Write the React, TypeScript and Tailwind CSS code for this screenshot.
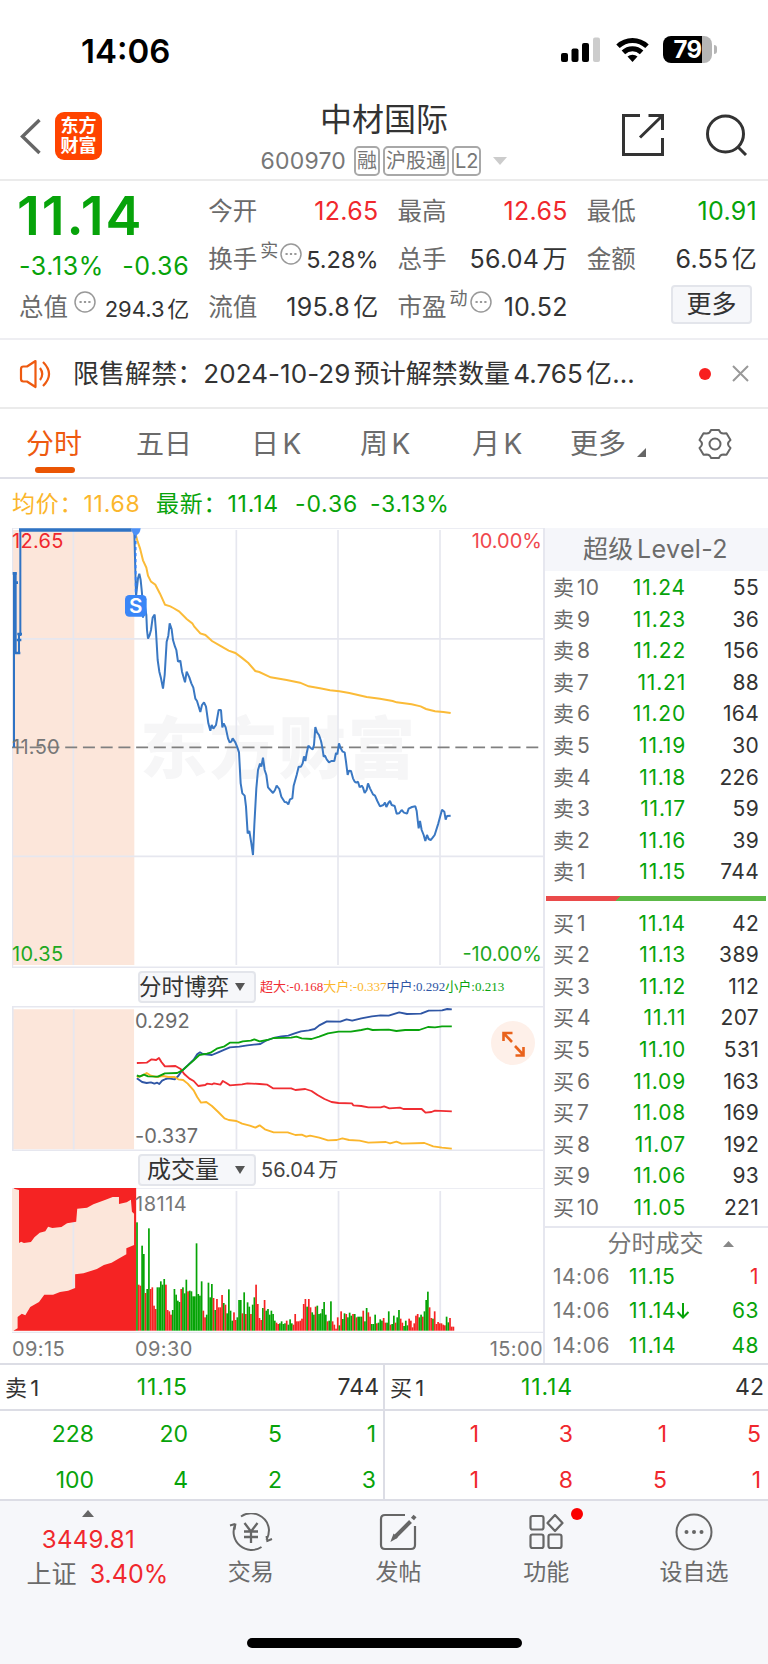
import type { ReactNode } from 'react';
import clsx from 'clsx';

type Level = { label: string; price: string; volume: number };

const asks: Level[] = [
  { label: '卖10', price: '11.24', volume: 55 },
  { label: '卖9', price: '11.23', volume: 36 },
  { label: '卖8', price: '11.22', volume: 156 },
  { label: '卖7', price: '11.21', volume: 88 },
  { label: '卖6', price: '11.20', volume: 164 },
  { label: '卖5', price: '11.19', volume: 30 },
  { label: '卖4', price: '11.18', volume: 226 },
  { label: '卖3', price: '11.17', volume: 59 },
  { label: '卖2', price: '11.16', volume: 39 },
  { label: '卖1', price: '11.15', volume: 744 }
];

const bids: Level[] = [
  { label: '买1', price: '11.14', volume: 42 },
  { label: '买2', price: '11.13', volume: 389 },
  { label: '买3', price: '11.12', volume: 112 },
  { label: '买4', price: '11.11', volume: 207 },
  { label: '买5', price: '11.10', volume: 531 },
  { label: '买6', price: '11.09', volume: 163 },
  { label: '买7', price: '11.08', volume: 169 },
  { label: '买8', price: '11.07', volume: 192 },
  { label: '买9', price: '11.06', volume: 93 },
  { label: '买10', price: '11.05', volume: 221 }
];

const trades = [
  { time: '14:06', price: '11.15', down: false, volume: 1, up: true },
  { time: '14:06', price: '11.14', down: true, volume: 63, up: false },
  { time: '14:06', price: '11.14', down: false, volume: 48, up: false }
];

// one entry per minute: r = up, g = down
const volumeBars =
  'g325 r138 r135 g255 g230 r113 g125 g307 r125 r130 r75 r65 g130 g130 g148 g138 g155 r138 r62 r58 r48 g62 g125 g108 g90 g86 r125 g130 g112 g153 r118 g120 g118 g103 g103 g262 g110 g105 g148 r60 r40 g48 g144 g100 g140 r98 g62 r95 r70 r70 r107 g83 r78 g52 g124 g60 g30 r55 r32 g40 g92 g92 r52 g115 r50 g85 g72 r50 g78 g100 r138 r80 r38 r32 g68 r92 g60 g65 g48 g60 g50 g30 r24 r20 g22 g28 g20 g22 r30 g18 g34 g22 r18 r50 r28 r28 r30 r36 r80 r95 g72 r95 r70 g55 g48 r72 g75 g50 g52 g65 g86 g48 r28 g30 g88 r28 r18 r6 r40 g16 r58 g35 g52 r50 g40 g54 g45 r50 g50 r40 g42 g42 g42 r60 g28 g68 r55 r42 g20 g20 g48 r22 g24 g34 g30 r38 r24 g24 g58 r18 g20 g45 r24 g40 g62 r36 r24 g14 g30 g16 r36 r30 r10 r22 r45 r50 g40 g48 r42 g58 g92 g117 r70 r38 g36 r58 r20 r26 r22 r22 r18 r16 g42 g25 r38 r12 r12'.split(
    ' '
  );

const priceLine =
  '403,50 408,245 414,190 418,176 422,195 426,235 429,308 434,270 439,300 441,345 444,371 449,360 453,345 458,308 464,299 468,350 473,435 478,470 483,490 489,521 494,480 500,380 505,362 509,325 515,343 519,375 525,395 529,405 534,440 541,437 546,470 555,502 560,470 568,487 574,505 580,518 586,551 591,558 601,591 606,570 612,562 618,575 625,625 631,647 635,630 640,641 648,630 656,585 663,585 667,637 671,625 677,637 684,670 689,682 694,680 698,670 706,682 712,697 717,712 722,805 727,835 734,842 738,875 743,955 748,948 754,985 759,1020 763,930 769,820 774,765 780,746 784,755 789,728 794,765 799,780 804,817 811,825 819,834 825,825 830,812 838,822 844,845 854,861 860,862 865,868 870,853 877,850 881,812 890,780 896,755 903,755 908,745 912,724 916,738 920,715 925,692 932,699 938,703 942,690 946,636 951,652 957,660 963,678 967,697 971,725 975,722 980,733 987,742 994,738 1003,738 1008,714 1012,718 1017,685 1022,700 1028,710 1034,712 1038,740 1043,780 1047,767 1053,768 1059,790 1064,800 1069,803 1074,800 1079,817 1085,812 1089,818 1094,834 1100,825 1104,805 1110,820 1119,838 1125,842 1132,858 1140,874 1150,870 1155,863 1159,876 1165,864 1170,858 1175,870 1184,873 1190,896 1197,895 1205,885 1212,893 1221,896 1226,881 1236,876 1246,874 1250,888 1253,915 1256,940 1260,918 1265,945 1271,960 1276,978 1281,960 1286,972 1292,975 1298,968 1304,960 1315,925 1326,884 1333,890 1337,914 1341,903 1352,902';

const averageLine =
  '405,50 413,80 420,100 429,136 439,158 444,182 453,200 466,209 480,236 495,269 511,274 520,279 537,289 560,312 577,325 583,335 601,355 616,360 636,378 660,392 686,407 706,414 725,428 745,444 766,468 778,471 812,487 860,495 900,503 926,514 960,520 990,526 1018,529 1048,534 1100,546 1140,551 1178,558 1190,562 1235,568 1262,574 1278,582 1305,589 1330,591 1352,594';

const Circled = ({ className }: { className?: string }) => (
  <svg className={clsx('size-[22px] shrink-0', className)} viewBox="0 0 22 22" fill="none" stroke="#999">
    <circle cx="11" cy="11" r="10" strokeWidth="1.5" />
    <path d="M5.5 11h2.2M9.9 11h2.2M14.3 11h2.2" strokeWidth="2.2" />
  </svg>
);

const StatusBar = () => (
  <div className="flex h-[96px] items-start justify-between pl-[81px] pr-[51px] pt-[35px]">
    <span className="text-[33px] font-semibold leading-8 text-black">14:06</span>
    <div className="flex items-center gap-4 pt-px">
      <svg width="39" height="26" viewBox="0 0 39 26">
        <rect x="0" y="16" width="7" height="9" rx="2" />
        <rect x="10.5" y="11.5" width="7" height="13.5" rx="2" />
        <rect x="21" y="6" width="7" height="19" rx="2" />
        <rect x="32" y="0.5" width="7" height="24.5" rx="2" fill="#ccc" />
      </svg>
      <svg width="33" height="25" viewBox="0 0 33 25" fill="none" stroke="#000" strokeWidth="5">
        <path d="M2 9.3a21 21 0 0 1 29 0" />
        <path d="M7.4 15.4a13 13 0 0 1 18.2 0" />
        <path d="M16.5 25l-5-5.4a7.5 7.5 0 0 1 10 0z" fill="#000" stroke="none" />
      </svg>
      <div className="-ml-0.5 flex items-center">
        <div className="flex h-[27px] w-[49px] items-center justify-center rounded-[8px] bg-[linear-gradient(90deg,#000_79%,#b5b5b5_79%)] text-[24px] font-bold leading-none tracking-tight text-white">
          79
        </div>
        <div className="ml-[2px] h-[9px] w-[3px] rounded-r-full bg-[#b5b5b5]" />
      </div>
    </div>
  </div>
);

const Tag = ({ children }: { children: ReactNode }) => (
  <span className="flex h-[30px] items-center rounded-[5px] border-2 border-[#a8a8a8] px-px text-[20px] leading-none text-[#777]">
    {children}
  </span>
);

const Header = () => (
  <div className="flex h-[85px] items-center justify-between border-b-2 border-[#ebebeb] pl-5 pr-5">
    <div className="flex w-[200px] items-center gap-[14px] pb-[3px]">
      <svg width="21" height="37" viewBox="0 0 21 37" fill="none" stroke="#666" strokeWidth="3.4">
        <path d="M19.5 2L2.5 18.5l17 16.5" />
      </svg>
      <div className="flex h-[48px] w-[47px] flex-col items-center justify-center rounded-[9px] bg-[#ff4400] text-[18px] font-bold leading-[20px] text-white">
        <span>东方</span>
        <span>财富</span>
      </div>
    </div>
    <div className="flex flex-col items-center">
      <div className="text-[32px] leading-[42px] text-[#333]">中材国际</div>
      <div className="flex h-[36px] items-center gap-[3px] pt-[5px]">
        <span className="mr-[5px] text-[23px] tracking-[0.2px] text-[#777]">600970</span>
        <Tag>融</Tag>
        <Tag>沪股通</Tag>
        <Tag>L2</Tag>
        <svg className="ml-[9px]" width="14" height="8" viewBox="0 0 14 8" fill="#ccc">
          <path d="M0 0h14L7 8z" />
        </svg>
      </div>
    </div>
    <div className="flex w-[200px] items-center justify-end gap-[41px] pb-[6px]">
      <svg width="44" height="44" viewBox="0 0 44 44" fill="none" stroke="#333" strokeWidth="3">
        <path d="M19 2.5H2.5v39h39V25" />
        <path d="M27.5 2.5h14V17M41 3L19 24.5" />
      </svg>
      <svg width="42" height="42" viewBox="0 0 42 42" fill="none" stroke="#333" strokeWidth="3">
        <circle cx="19.5" cy="20" r="18" />
        <path d="M32 33l8 8" />
      </svg>
    </div>
  </div>
);

const Stat = ({ label, value, sup, color = 'text-[#333]', size = 'text-[25px] tracking-[0.3px]' }: {
  label: string;
  value: string;
  sup?: string;
  color?: string;
  size?: string;
}) => (
  <div className="flex h-[48px] items-center justify-between whitespace-nowrap leading-none">
    <span className="flex items-center text-[24.5px] text-[#6b6b6b]">
      {label}
      {sup && <span className="mb-4 ml-[3px] mr-[2px] text-[18px]">{sup}</span>}
      {sup !== undefined && <Circled className={sup ? 'mb-2.5' : 'mb-2.5 ml-[6px]'} />}
    </span>
    <span className={clsx('-mr-px', color, size)}>{value}</span>
  </div>
);

const Stats = () => (
  <div className="grid h-[159px] grid-cols-4 gap-x-5 border-b-2 border-[#eeeef2] pl-[19px] pr-3 pt-[6px]">
    <div>
      <div className="-ml-[2px] h-[56px] pt-[2px] text-[54px] font-semibold leading-none tracking-[1.9px] text-[#07a30a]">11.14</div>
      <div className="-mr-px flex h-[46px] items-center justify-between text-[25px] leading-none tracking-[0.6px] text-[#07a30a]">
        <span>-3.13%</span>
        <span>-0.36</span>
      </div>
      <div className="-mt-1.5">
        <Stat label="总值" sup="" value="294.3亿" size="pt-[3px] text-[22px]" />
      </div>
    </div>
    <div>
      <Stat label="今开" value="12.65" color="text-[#f0282d]" />
      <Stat label="换手" sup="实" value="5.28%" size="pt-[2px] text-[23.5px]" />
      <Stat label="流值" value="195.8亿" />
    </div>
    <div>
      <Stat label="最高" value="12.65" color="text-[#f0282d]" />
      <Stat label="总手" value="56.04万" />
      <Stat label="市盈" sup="动" value="10.52" />
    </div>
    <div>
      <Stat label="最低" value="10.91" color="text-[#07a30a]" />
      <Stat label="金额" value="6.55亿" />
      <div className="ml-auto mr-[4px] mt-[2px] flex h-[39px] w-[81px] items-center justify-center rounded-[4px] border-2 border-[#e3e5eb] bg-[#f6f7fa] text-[25px] text-[#333]">
        更多
      </div>
    </div>
  </div>
);

const Notice = () => (
  <div className="flex h-[69px] items-center border-b-2 border-[#ebebeb] pl-[19px] pr-[19px]">
    <svg width="34" height="30" viewBox="0 0 34 30" fill="none" stroke="#ee5a10" strokeWidth="2.2" strokeLinejoin="round">
      <path d="M16.5 2L8 7.5H4.5Q2 7.5 2 10v10q0 2.500 2.500 2.500H8l8.500 5.500z" />
      <path d="M21 9q4.500 6 0 12M24 3q12 12 0 24" />
    </svg>
    <span className="ml-5 whitespace-nowrap text-[26px] tracking-[0.06px] text-[#333]">限售解禁：2024-10-29预计解禁数量4.765亿...</span>
    <span className="ml-auto size-3 rounded-full bg-[#f81f1f]" />
    <svg className="ml-[21px]" width="17" height="17" viewBox="0 0 17 17" stroke="#999" strokeWidth="2">
      <path d="M1 1l15 15M16 1L1 16" />
    </svg>
  </div>
);

const Tabs = () => (
  <div className="flex h-[70px] items-start border-b-2 border-[#dfe0e8] pt-[15px] text-[28px] leading-[40px] text-[#6b6b6b]">
    <div className="ml-[26px] w-[110px] text-[#ee5a10]">
      分时
      <div className="ml-[9px] mt-[3px] h-[6px] w-10 rounded-full bg-[#ea5504]" />
    </div>
    <div className="w-[115px]">五日</div>
    <div className="w-[109px]">日K</div>
    <div className="w-[112px]">周K</div>
    <div className="w-[98px]">月K</div>
    <div className="flex w-[128px] items-end">
      更多
      <svg className="mb-[7px] ml-[11px]" width="9" height="9" viewBox="0 0 9 9" fill="#666">
        <path d="M9 0v9H0z" />
      </svg>
    </div>
    <svg className="mt-[4px]" width="34" height="32" viewBox="0 0 34 32" fill="none" stroke="#666" strokeWidth="2">
      <path
        d="M13 2h8q1 3.500 4.500 3.500l3-.2 4 6.700q-2.500 2-2.500 4t2.500 4l-4 6.700-3-.2Q22 26.500 21 30h-8q-1-3.500-4.500-3.500l-3 .2-4-6.700Q4 18 4 16t-2.500-4l4-6.700 3 .2Q12 5.500 13 2z"
        strokeLinejoin="round"
      />
      <circle cx="17" cy="16" r="5.500" />
    </svg>
  </div>
);

const Summary = () => (
  <div className="flex h-[49px] items-center whitespace-pre pl-3 pt-px text-[23px] tracking-[0.8px] text-[#07a30a]">
    <span className="w-[144px] text-[#fbb62c]">均价：11.68</span>
    <span className="w-[139px]">最新：11.14</span>
    <span className="w-[75px]">-0.36</span>
    <span>-3.13%</span>
  </div>
);

const PriceChart = () => (
  <div className="relative h-[440px] text-[20px] leading-none">
    <svg className="block h-[440px] w-[531px]" viewBox="36 39 1593 1320" fill="none">
      <path d="M36 45h367v1305H36z" fill="#fce6da" />
      <text x="420" y="774" fontSize="202" fontWeight="900" fill="#f6f6f7" textLength="825">东方财富</text>
      <path d="M36 39H1629M36 371.500H1629M36 1024H1629M36 1357H1629M37 39V1357" stroke="#e6e7ef" strokeWidth="5" />
      <path d="M220 45V1350M709 45V1350M1014 45V1350M1320 45V1350" stroke="#e6e7ef" strokeWidth="5" />
      <path d="M36 697H1620" stroke="#808080" strokeWidth="5" strokeDasharray="36 17.200" />
      <path d="M42 697V175h5v30V414h10V360h4V45" stroke="#2f73c4" strokeWidth="6" />
      <path d="M38 175h12M46 203h8M45 414h16M50 375h14M52 357h14" stroke="#2f73c4" strokeWidth="8" />
      <path d="M57 45H395" stroke="#2f73c4" strokeWidth="11" />
      <polyline points={averageLine} stroke="#fbbb38" strokeWidth="6" />
      <polyline points={priceLine} stroke="#3a78c3" strokeWidth="6" strokeLinejoin="bevel" />
      <path d="M407 60V240" stroke="#2f7df6" strokeWidth="5" strokeDasharray="10 8" />
      <path d="M394 40h28q-2 18-15 22-11-4-13-22z" fill="#4c90f7" />
      <rect x="375" y="240" width="65" height="65" rx="13" fill="#3a86f7" />
      <text x="407.500" y="295" fontSize="62" fontWeight="600" fill="#fff" textAnchor="middle">S</text>
    </svg>
    <span className="absolute left-0 top-[3px] tracking-[0.3px] text-[#f0282d]">12.65</span>
    <span className="absolute right-px top-[3px] text-[#f0484d]">10.00%</span>
    <span className="absolute left-0 top-[209px] tracking-[0.3px] text-[#777]">11.50</span>
    <span className="absolute bottom-[4px] left-0 tracking-[0.3px] text-[#1fa822]">10.35</span>
    <span className="absolute bottom-[4px] right-px text-[#1fa822]">-10.00%</span>
  </div>
);

const Picker = ({ children }: { children: ReactNode }) => (
  <div className="flex h-[32px] w-[118px] items-center justify-between whitespace-nowrap rounded-[4px] border-2 border-[#e3e5eb] bg-[#f6f7fa] pr-[9px] text-[#333]">
    {children}
    <svg width="10" height="8" viewBox="0 0 10 8" fill="#555">
      <path d="M0 0h10L5 8z" />
    </svg>
  </div>
);

const FlowChart = () => (
  <div className="relative h-[145px] text-[20px] leading-none text-[#6b6b6b]">
    <svg className="block h-[145px] w-[531px]" viewBox="34 137 1514 435" preserveAspectRatio="none" fill="none">
      <path d="M34 147h348v420H34z" fill="#fce6da" />
      <g stroke="#e6e7ef" strokeWidth="5">
        <path d="M34 139H1548M34 570H1548M36 137V570M210 147V567M674 147V567M965 147V567M1255 147V567" />
      </g>
      <g strokeWidth="5.500" strokeLinejoin="round">
        <polyline
          stroke="#2f56a5"
          points="390,354 405,365 418,368 430,366 440,370 448,367 454,371 462,361 472,356 480,354 498,357 508,347 518,332 535,315 552,298 562,282 570,276 578,281 604,284 622,276 640,268 655,261 682,259 705,255 742,251 760,240 780,233 802,228 822,226 840,219 858,213 880,210 897,206 910,195 932,183 970,184 988,177 1004,181 1030,174 1060,168 1085,165 1108,166 1138,156 1160,161 1200,160 1222,151 1260,150 1275,146 1288,147"
        />
        <polyline
          stroke="#fbb62c"
          points="390,350 405,346 418,338 428,345 445,350 465,347 480,350 498,350 508,357 522,359 535,370 552,390 562,410 573,427 588,425 604,437 622,455 640,474 652,479 674,482 690,490 712,496 728,502 740,495 755,507 780,516 820,516 842,524 860,523 873,529 884,526 910,532 935,540 960,539 976,534 995,539 1025,541 1050,547 1100,545 1112,549 1130,544 1145,550 1210,548 1235,558 1260,562 1288,565"
        />
        <polyline
          stroke="#f02d32"
          points="390,308 418,307 432,297 445,299 453,293 460,305 470,318 500,317 515,326 525,341 540,355 552,362 565,377 585,374 590,370 605,372 610,369 628,373 635,362 645,368 655,375 690,372 705,369 740,371 762,373 778,384 830,384 842,389 870,386 888,392 905,404 925,416 945,425 965,428 1003,429 1007,435 1030,437 1050,441 1085,441 1095,438 1110,444 1140,442 1150,446 1202,446 1213,457 1230,455 1240,451 1288,453"
        />
        <polyline
          stroke="#0aa30d"
          points="390,345 398,349 410,343 422,348 450,349 470,339 505,338 520,330 538,313 552,300 568,284 590,280 600,277 620,264 640,258 655,247 680,247 692,243 715,241 725,237 740,243 762,239 780,233 830,232 845,229 860,234 888,236 910,229 935,219 965,214 1000,214 1030,209 1048,205 1062,209 1108,208 1130,212 1155,209 1195,209 1220,200 1240,201 1260,198 1288,198"
        />
      </g>
    </svg>
    <span className="absolute left-[123px] top-[5px]">0.292</span>
    <span className="absolute bottom-[5px] left-[123px] tracking-[0.1px]">-0.337</span>
    <svg className="absolute left-[479px] top-[15px]" width="44" height="44" viewBox="0 0 44 44" fill="none">
      <circle cx="22" cy="22" r="22" fill="#fef0e9" />
      <path d="M12.500 20V12h9M12.500 12l8.500 9M24.500 34.500h8V26M32.500 34l-8.500-9" stroke="#e9621b" strokeWidth="2.600" />
    </svg>
  </div>
);

const VolumeChart = () => (
  <div className="relative h-[145px] text-[20px] leading-none tracking-[0.5px] text-[#777]">
    <svg className="block h-[145px] w-[531px]" viewBox="34 131 1514 435" preserveAspectRatio="none" fill="none">
      <path d="M34 133h350v426H34z" fill="#fce6da" />
      <path
        d="M34 131H1548M34 565H1548M209 220V440M674 140V559M965 140V559M1255 140V559"
        stroke="#e6e7ef"
        strokeWidth="5"
      />
      <path
        d="M38 131h350v428H38l12-7V518l12-10 10 5 14-25 25-15 15-22 25 0 20-8 23-4 20-8V390l24-3 38-13 20-12 22-7 17-10 25-15V312l22-10V208l-6-6-3-36-12 8-22 5V158h-18l-20 8-35 14-18 10-28 3-3 39-26 5-16 11-26 3-12-4-8 14-16 4-15 14-10 14-20 3-8-4-6 4V137l-12-3z"
        fill="#f52323"
      />
      {volumeBars.map((bar, i) => (
        <rect
          key={i}
          x={388 + i * 4.85}
          y={559 - parseInt(bar.slice(1))}
          width="4.850"
          height={parseInt(bar.slice(1))}
          fill={bar[0] === 'r' ? '#f52323' : '#06a406'}
        />
      ))}
    </svg>
    <span className="absolute left-[123px] top-[6px]">18114</span>
  </div>
);

const BookRow = ({ label, price, volume }: Level) => (
  <div className="flex h-[31.55px] items-center whitespace-nowrap pl-[8px] pr-[9px] text-[21px] leading-none tracking-[0.3px]">
    <span className="w-[50px]">{label}</span>
    <span className="w-[83px] text-right tracking-[0.8px] text-[#07a30a]">{price}</span>
    <span className="ml-auto text-[#333]">{volume}</span>
  </div>
);

const OrderBook = () => (
  <div className="w-[225px] border-l-2 border-[#e6e7ef] text-[#6b6b6b]">
    <div className="flex h-[43px] items-center justify-center bg-[#f5f6fa] pr-[2px] pt-px text-[25px] tracking-[0.4px]">超级Level-2</div>
    <div className="h-[316.5px] pt-[1px]">
      {asks.map((level) => (
        <BookRow key={level.label} {...level} />
      ))}
    </div>
    <div className="ml-[1px] mt-[8px] h-[5px] w-[220px] bg-[linear-gradient(135deg,#ea4a4a_33%,#5cb947_33%)]" />
    <div className="mt-[7px] h-[318.5px]">
      {bids.map((level) => (
        <BookRow key={level.label} {...level} />
      ))}
    </div>
    <div className="flex h-[33px] items-center justify-center gap-[19px] border-t-2 border-[#e6e7ef] pl-[40px] pr-3 text-[24px] text-[#777]">
      分时成交
      <svg width="11" height="6" viewBox="0 0 11 6" fill="#888">
        <path d="M0 6L5.500 0 11 6z" />
      </svg>
    </div>
    {trades.map((trade, i) => (
      <div key={i} className="flex h-[34.5px] items-center pl-[8px] pr-[9px] text-[21px] leading-none tracking-[0.5px]">
        <span className="w-[76px] text-[#777]">{trade.time}</span>
        <span className="flex items-center tracking-[0.8px] text-[#07a30a]">
          {trade.price}
          {trade.down && (
            <svg width="14" height="16" viewBox="0 0 14 16" fill="none" stroke="#07a30a" strokeWidth="2">
              <path d="M7 0v14.500M1.500 9L7 14.500 12.500 9" />
            </svg>
          )}
        </span>
        <span className={clsx('ml-auto', trade.up ? 'text-[#f0282d]' : 'text-[#07a30a]')}>{trade.volume}</span>
      </div>
    ))}
  </div>
);

const Queue = ({ label, price, volume, rows, color }: {
  label: string;
  price: string;
  volume: string;
  rows: string[][];
  color: string;
}) => (
  <div className="w-[385px] border-r-2 border-[#dcdde5] text-[23px] leading-none last:w-[383px] last:border-r-0">
    <div className="flex h-[46px] items-center border-b-2 border-[#dcdde5] pl-[5px] pr-[4px] pt-px text-[#333]">
      <span className="w-[70px] text-[22px] tracking-[0.5px]">{label}</span>
      <span className="w-[113px] text-right tracking-[0.9px] text-[#07a30a]">{price}</span>
      <span className="ml-auto">{volume}</span>
    </div>
    {rows.map((row, i) => (
      <div key={i} className={clsx('grid h-[46px] grid-cols-4 items-center pr-[7px] text-right', color)}>
        {row.map((cell, j) => (
          <span key={j}>{cell}</span>
        ))}
      </div>
    ))}
  </div>
);

const NavItem = ({ label, children }: { label: string; children: ReactNode }) => (
  <div className="flex w-[148px] flex-col items-center">
    <div className="relative mt-[3px] flex h-[38px] items-center">{children}</div>
    <span className="mt-[4px] text-[23px] leading-[34px]">{label}</span>
  </div>
);

const BottomNav = () => (
  <div className="flex h-[124px] pt-[9px] text-[#6b6b6b]">
    <div className="flex w-[177px] flex-col items-center text-[25px] leading-[35px]">
      <svg width="12" height="7" viewBox="0 0 12 7" fill="#666">
        <path d="M0 7l6-7 6 7z" />
      </svg>
      <span className="mt-[5px] text-[24px] tracking-[0.3px] text-[#f0282d]">3449.81</span>
      <span className="ml-[18px] whitespace-nowrap">
        上证<span className="ml-[10px] text-[#f0282d]">3.40%</span>
      </span>
    </div>
    <NavItem label="交易">
      <svg width="44" height="38" viewBox="0 0 44 38" fill="none" stroke="#666" strokeWidth="2">
        <path d="M12 3.500A18 18 0 0 1 40 17q0 5-2.500 10M32.500 34A18 18 0 0 1 6 12M38.500 29l-1-6M38 28l5-2M6 11l-5 1.500M6.500 10.500l-1 6" />
        <path d="M15.500 10l6.500 8.500L28.500 10M22 18v12M15 18.500h14M15 24h14" strokeWidth="2.300" />
      </svg>
    </NavItem>
    <NavItem label="发帖">
      <svg width="38" height="38" viewBox="0 0 38 38" fill="none" stroke="#666" strokeWidth="2.200">
        <path d="M26 2H6Q2 2 2 6v26q0 4 4 4h26q4 0 4-4V13" />
        <path d="M31.500 8.500L16 24" strokeWidth="4" />
        <path d="M13.500 26.500l1.500-4 2 2z" fill="#666" />
        <path d="M33.500 6l2.500-3" strokeWidth="4" />
      </svg>
    </NavItem>
    <NavItem label="功能">
      <svg width="35" height="36" viewBox="0 0 35 36" fill="none" stroke="#666" strokeWidth="2.200">
        <rect x="1.500" y="2" width="13" height="13.500" rx="2" />
        <rect x="1.500" y="20.500" width="13" height="13.500" rx="2" />
        <rect x="19.500" y="20.500" width="13" height="13.500" rx="2" />
        <path d="M26 1l7.500 8L26 17l-7.500-8z" strokeLinejoin="round" />
      </svg>
      <span className="absolute -right-[19px] -top-[5px] size-3 rounded-full bg-[#fa0000]" />
    </NavItem>
    <NavItem label="设自选">
      <svg width="38" height="38" viewBox="0 0 38 38" fill="none" stroke="#666" strokeWidth="2">
        <circle cx="19" cy="19" r="17.500" />
        <g fill="#666" stroke="none">
          <circle cx="11.500" cy="19" r="2" />
          <circle cx="19" cy="19" r="2" />
          <circle cx="26.500" cy="19" r="2" />
        </g>
      </svg>
    </NavItem>
  </div>
);

export default function App() {
  return (
    <div className="h-[1664px] w-[768px] overflow-hidden bg-white font-['Inter','Noto_Sans_CJK_SC',sans-serif] [text-autospace:normal]">
      <StatusBar />
      <Header />
      <Stats />
      <Notice />
      <Tabs />
      <Summary />
      <div className="flex h-[835px]">
        <div className="w-[543px] pl-3">
          <PriceChart />
          <div className="flex h-[38px] items-center pl-[126px]">
            <div className="text-[22.5px]">
              <Picker>
                <span className="-ml-px">分时博弈</span>
              </Picker>
            </div>
            <div className="ml-1 whitespace-nowrap font-['Liberation_Serif','Noto_Sans_CJK_SC',serif] text-[13px] [text-autospace:no-autospace]">
              <span className="text-[#f02d32]">超大:-0.168</span>
              <span className="text-[#fbb62c]">大户:-0.337</span>
              <span className="text-[#2f56a5]">中户:0.292</span>
              <span className="text-[#0aa30d]">小户:0.213</span>
            </div>
          </div>
          <FlowChart />
          <div className="flex h-[37px] items-center pl-[126px]">
            <div className="text-[24px]">
              <Picker>
                <span className="ml-[7px]">成交量</span>
              </Picker>
            </div>
            <span className="ml-[5px] text-[20px] text-[#444]">56.04万</span>
          </div>
          <VolumeChart />
          <div className="flex h-[30px] items-center pt-px text-[20px] leading-none tracking-[0.4px] text-[#777]">
            <span className="w-[123px]">09:15</span>
            <span>09:30</span>
            <span className="ml-auto">15:00</span>
          </div>
        </div>
        <OrderBook />
      </div>
      <div className="flex h-[138px] border-y-2 border-[#dcdde5]">
        <Queue label="卖1" price="11.15" volume="744" rows={[['228', '20', '5', '1'], ['100', '4', '2', '3']]} color="text-[#07a30a]" />
        <Queue label="买1" price="11.14" volume="42" rows={[['1', '3', '1', '5'], ['1', '8', '5', '1']]} color="text-[#f0282d]" />
      </div>
      <div className="h-[163px] bg-[#f6f7fa]">
        <BottomNav />
        <div className="mx-auto mt-[13px] h-[10px] w-[275px] rounded-full bg-black" />
      </div>
    </div>
  );
}
